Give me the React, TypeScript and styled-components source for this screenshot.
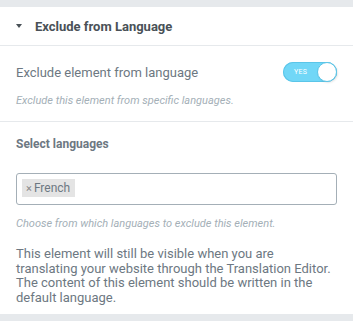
import styled, { createGlobalStyle } from "styled-components"

const Global = createGlobalStyle`
    html, body { margin: 0; padding: 0; background: #e6e9ec; }
    body { font-family: Roboto, "Liberation Sans", Arial, sans-serif; }
`

export default function App() {
    return (
        <>
            <Global />
            <Page>
                <Panel>
                    <Header>
                        <Caret />
                        <Title>Exclude from Language</Title>
                    </Header>
                    <Section>
                        <Row>
                            <Label>Exclude element from language</Label>
                            <Switch>
                                <SwitchText>YES</SwitchText>
                                <Knob />
                            </Switch>
                        </Row>
                        <Hint>Exclude this element from specific languages.</Hint>
                    </Section>
                    <Section $top={15}>
                        <SubTitle>Select languages</SubTitle>
                        <Select>
                            <Tag><TagX>×</TagX>French</Tag>
                        </Select>
                        <Hint>Choose from which languages to exclude this element.</Hint>
                        <Note>
                            This element will still be visible when you are translating your website through the Translation Editor. The content of this element should be written in the default language.
                        </Note>
                    </Section>
                </Panel>
            </Page>
        </>
    )
}

const Page = styled.div`
    padding: 7px 0 0;
    height: 321px;
    box-sizing: border-box;
`

const Panel = styled.div`
    background: #fff;
    height: 307px;
`

const Header = styled.div`
    height: 38px;
    display: flex;
    align-items: center;
    padding: 0 16px;
    border-bottom: 1px solid #e6e9ec;
`

const Caret = styled.span`
    width: 0;
    height: 0;
    border-left: 3.5px solid transparent;
    border-right: 3.5px solid transparent;
    border-top: 4px solid #495157;
    margin-right: 13px;
`

const Title = styled.div`
    font-size: 13px;
    font-weight: 700;
    color: #495157;
`

const Section = styled.div<{ $top?: number }>`
    padding: ${p => p.$top ?? 16}px 16px 14px;
    & + & {
        border-top: 1px solid #e6e9ec;
    }
`

const Row = styled.div`
    display: flex;
    align-items: center;
    justify-content: space-between;
    height: 20px;
`

const Label = styled.div`
    font-size: 13px;
    color: #6d7882;
`

const Switch = styled.div`
    position: relative;
    width: 54px;
    height: 20px;
    border-radius: 10px;
    background: #71d7f7;
    box-shadow: inset 0 0 0 1px #5bc5e8;
    display: flex;
    align-items: center;
`

const SwitchText = styled.span`
    font-size: 7px;
    color: #fff;
    padding-left: 11px;
    letter-spacing: 0.3px;
`

const Knob = styled.span`
    position: absolute;
    right: 0;
    top: 0;
    width: 18px;
    height: 18px;
    border-radius: 50%;
    background: #fff;
    border: 1px solid #5bc5e8;
    box-shadow: 1px 1px 2px rgba(0, 0, 0, 0.1);
`

const Hint = styled.div`
    font-size: 11px;
    font-style: italic;
    color: #a4afb7;
    margin-top: 12px;
`

const SubTitle = styled.div`
    font-size: 12px;
    font-weight: 700;
    color: #6d7882;
    line-height: 15px;
`

const Select = styled.div`
    margin-top: 21px;
    height: 32px;
    box-sizing: border-box;
    border: 1px solid #a4afb7;
    border-radius: 3px;
    padding: 5px;
    display: flex;
    align-items: flex-start;
`

const Tag = styled.span`
    background: #e4e4e4;
    height: 18px;
    line-height: 18px;
    padding: 0 5px 0 4px;
    font-size: 12px;
    color: #6d7882;
`

const TagX = styled.span`
    font-size: 11px;
    color: #888;
    margin-right: 2px;
`

const Note = styled.div`
    margin-top: 17px;
    font-size: 13px;
    line-height: 14.6px;
    color: #6d7882;
`
